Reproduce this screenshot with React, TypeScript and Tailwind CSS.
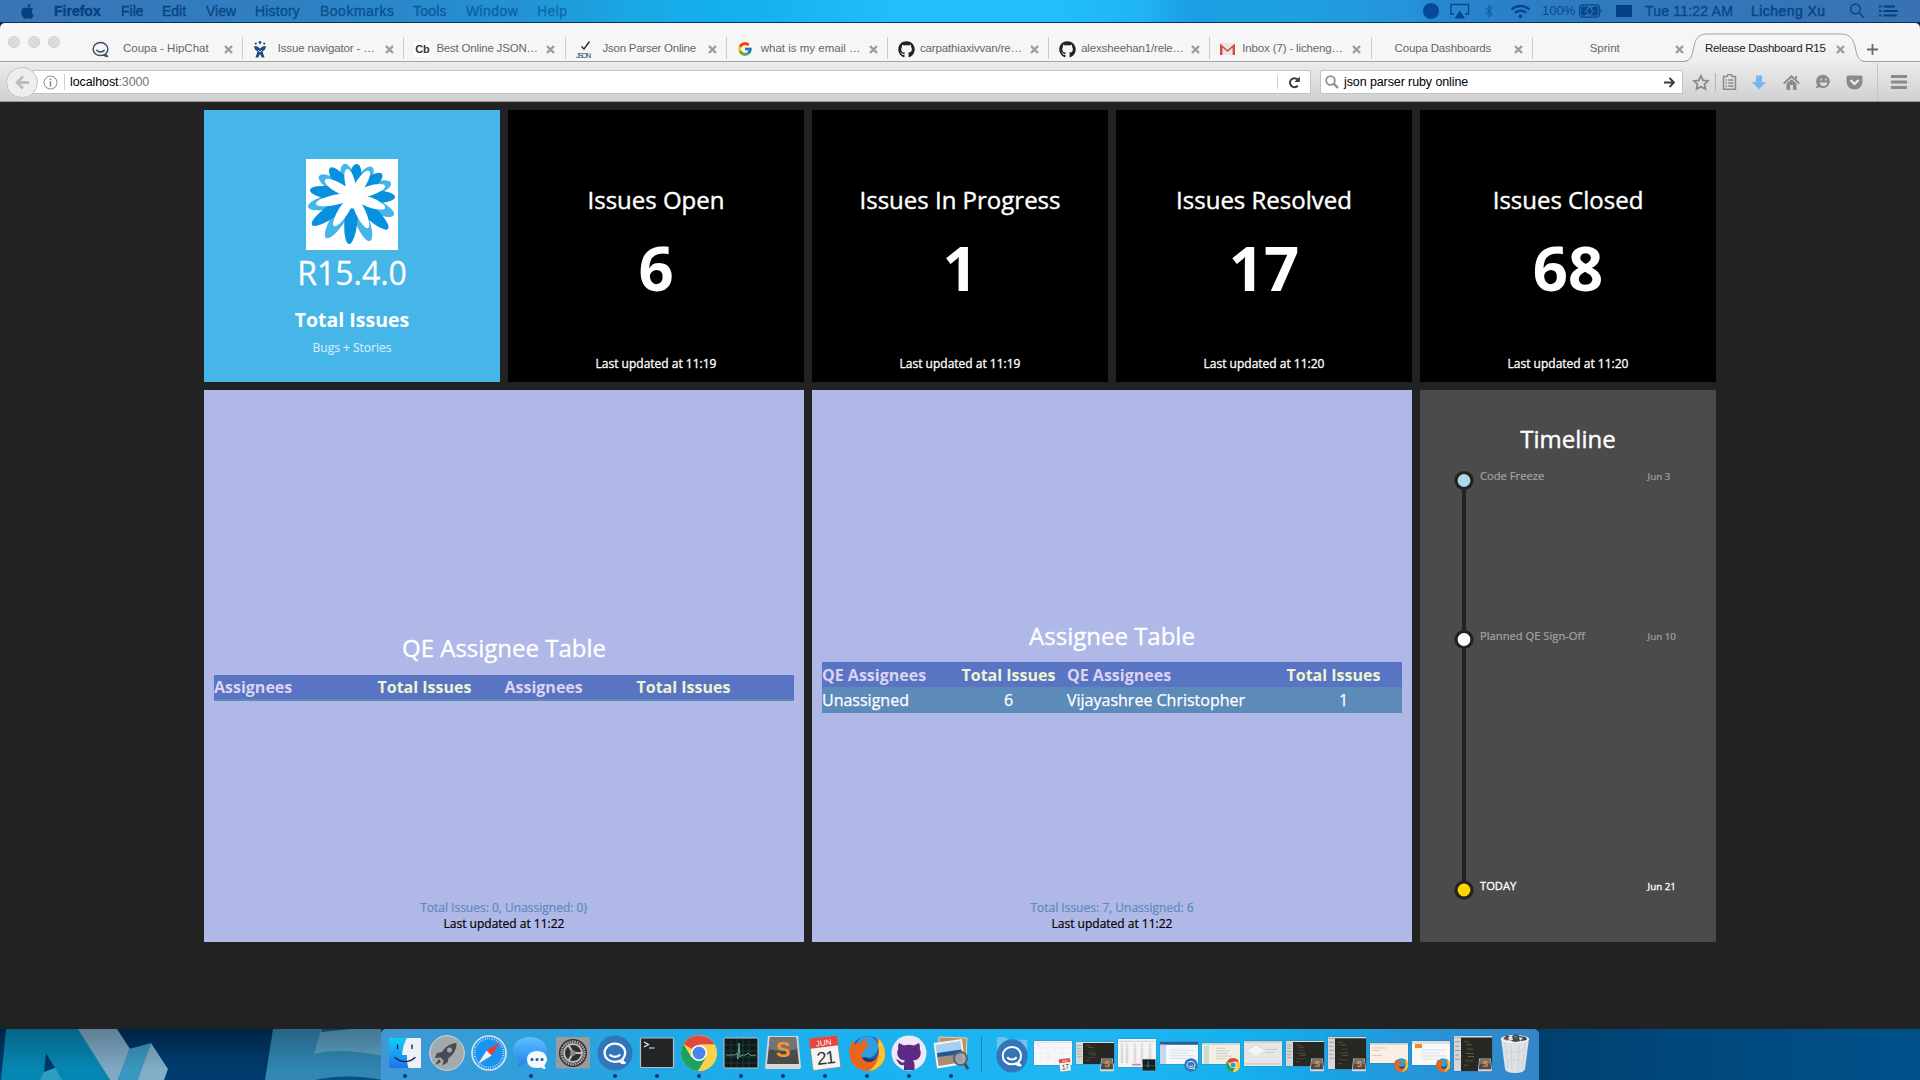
import type { ReactNode } from "react";
import { FaGithub, FaApple, FaWifi, FaBluetoothB } from "react-icons/fa";
import { FcGoogle } from "react-icons/fc";

const helv = "font-['Liberation_Sans',Arial,sans-serif]";

/* ---------- Menu bar ---------- */

const menus = [
  { t: "Firefox", c: "w-[67px] font-bold text-[#04407c]" },
  { t: "File", c: "w-[41px] text-[#04407c]" },
  { t: "Edit", c: "w-[44px] text-[#04437f]" },
  { t: "View", c: "w-[49px] text-[#044783]" },
  { t: "History", c: "w-[65px] tracking-[0.2px] text-[#054a88]" },
  { t: "Bookmarks", c: "w-[93px] tracking-[0.5px] text-[#06508e]" },
  { t: "Tools", c: "w-[53px] tracking-[0.2px] text-[#075a98]" },
  { t: "Window", c: "w-[71px] tracking-[0.4px] text-[#0862a0]" },
  { t: "Help", c: "w-[60px] tracking-[0.4px] text-[#096ca9]" },
];

function MenuBar() {
  return (
    <div
      className={`${helv} flex h-[23px] items-center border-b border-[#04305a] text-[14px] leading-[22px] [-webkit-text-stroke:0.3px] bg-[linear-gradient(90deg,#3a74b5_0px,#2e80c2_300px,#2492d4_520px,#18a9e6_640px,#13b1f0_750px,#23bdfb_900px,#23bdfb_1060px,#1fb5f5_1140px,#1c9ee2_1190px,#1fa0e2_1290px,#2593db_1410px,#2686d0_1440px,#3079bd_1600px,#3872b2_1920px)]`}
    >
      <div className="flex w-[54px] pl-[19px]">
        <FaApple size={17} color="#04407c" />
      </div>
      {menus.map((m) => (
        <span key={m.t} className={`${m.c} whitespace-nowrap`}>{m.t}</span>
      ))}
      <div className="ml-auto flex items-center text-[#07458a]">
        <svg width="16" height="16" viewBox="0 0 16 16" className="mr-[11px]"><circle cx="8" cy="8" r="8" fill="#06499a" /></svg>
        <svg width="20" height="16" viewBox="0 0 20 16" className="mr-[12px]">
          <path d="M4 11H1V1.500H18.500V11H15" fill="none" stroke="#07458a" strokeWidth="1.300" />
          <path d="M9.750 7.500L15 15.500H4.500Z" fill="#07458a" />
        </svg>
        <FaBluetoothB size={14} className="mr-[15px] opacity-60" />
        <FaWifi size={19} className="mr-[12px]" />
        <span className="w-[37px] text-[13px] [-webkit-text-stroke:0px]">100%</span>
        <svg width="24" height="14" viewBox="0 0 24 14" className="mr-[13px]">
          <rect x="0.700" y="0.900" width="19.600" height="12.200" rx="2.500" fill="none" stroke="#07458a" strokeWidth="1.300" />
          <path d="M21.500 4.500Q23.500 7 21.500 9.500Z" fill="#07458a" />
          <path d="M2.300 2.500H10L4.800 8H8.500L6.500 11.500H2.300ZM18.700 2.500H14L12.500 6H16L11 11.500H18.700ZM12.500 2.500L6 7.600H9.500L8.500 11.500L15 6.400H11.500Z" fill="#07458a" />
        </svg>
        <svg width="16" height="12" className="mr-[13px]"><rect width="16" height="12" fill="#053f83" /></svg>
        <span className="w-[106px] whitespace-nowrap text-[14px] tracking-[0.2px]">Tue 11:22 AM</span>
        <span className="w-[98px] whitespace-nowrap text-[14px] tracking-[0.450px] [-webkit-text-stroke:0.5px]">Licheng Xu</span>
        <svg width="16" height="16" viewBox="0 0 16 16" className="mr-[14px]" fill="none" stroke="#07458a" strokeWidth="1.500">
          <circle cx="6.500" cy="6" r="4.800" /><path d="M10 9.500L15 15" />
        </svg>
        <svg width="19" height="12" viewBox="0 0 19 12" className="mr-[22px]" stroke="#053f83" strokeWidth="2">
          <path d="M0 1.500H2.500M0 6H2.500M0 10.500H2.500M4.500 1.500H16M4.500 6H19M4.500 10.500H18" />
        </svg>
      </div>
    </div>
  );
}

/* ---------- Tab strip ---------- */

function HipChatGlyph({ size, color, sw = 1.8 }: { size: number; color: string; sw?: number }) {
  return (
    <svg width={size} height={size} viewBox="0 0 18 18" fill="none" stroke={color} strokeWidth={sw} strokeLinecap="round" strokeLinejoin="round">
      <path d="M13.800 14.200C12.500 15 11 15.400 9 15.400C4.500 15.400 1.200 12.500 1.200 8.600C1.200 4.700 4.500 1.600 9 1.600C13.500 1.600 16.800 4.700 16.800 8.600C16.800 10.500 16 12.300 14.600 13.500C14.800 14.800 15.500 15.700 16.500 16.300C15.200 16.500 13.800 16 12.600 15" />
      <path d="M5 9.800C7 12.200 11 12.200 13 9.800" />
    </svg>
  );
}

const jira = (
  <svg width="14" height="17" viewBox="0 0 14 17">
    <g fill="#1d4a80">
      <circle cx="2.800" cy="2.600" r="1.100" /><circle cx="7" cy="1.500" r="1.400" /><circle cx="11.200" cy="2.600" r="1.100" />
    </g>
    <path d="M1 5L4.500 5.500L7 7.500L9.500 5.500L13 5L12 8.500L9.500 10.500L11.500 16.500H8.800L7 13L5.200 16.500H2.500L4.500 10.500L2 8.500Z" fill="#1d4a80" />
    <path d="M5 9.200L7 11L9 9.200" fill="none" stroke="#f6f6f6" strokeWidth="0.900" />
  </svg>
);
const cb = <span className="flex h-4 w-4 items-center justify-center bg-white text-[11px] font-bold tracking-tight text-[#333]">Cb</span>;
const json = (
  <svg width="16" height="17" viewBox="0 0 16 17">
    <path d="M5.500 5.500L8 8L13.500 0.500" fill="none" stroke="#222" strokeWidth="1.300" />
    <text x="0" y="16.500" fontSize="7" textLength="15" fontFamily="Liberation Sans" fill="#15406a">JSON</text>
  </svg>
);
const gmail = (
  <svg width="15" height="12" viewBox="0 0 15 12">
    <rect width="15" height="12" rx="1" fill="#e8e6e6" />
    <path d="M0 12V0.500L7.500 7L15 0.500V12H12.600V4.500L7.500 9L2.400 4.500V12Z" fill="#d2493e" />
  </svg>
);

const tabs: { t: string; icon?: ReactNode; lead: string; w: string }[] = [
  { t: "Coupa - HipChat", icon: <HipChatGlyph size={17} color="#3a4a6b" sw={1.5} />, lead: "w-[31px]", w: "w-[101px]" },
  { t: "Issue navigator - …", icon: jira, lead: "w-[24.500px]", w: "w-[107.500px] tracking-[-0.15px]" },
  { t: "Best Online JSON…", icon: cb, lead: "w-[22px]", w: "w-[110px] tracking-[-0.2px]" },
  { t: "Json Parser Online", icon: json, lead: "w-[27px]", w: "w-[105px] tracking-[-0.25px]" },
  { t: "what is my email …", icon: <FcGoogle size={16} />, lead: "w-[24px]", w: "w-[108px]" },
  { t: "carpathiaxivvan/re…", icon: <FaGithub size={17} color="#222" />, lead: "w-[22px]", w: "w-[110px] tracking-[-0.15px]" },
  { t: "alexsheehan1/rele…", icon: <FaGithub size={17} color="#222" />, lead: "w-[22px]", w: "w-[110px] tracking-[-0.15px]" },
  { t: "Inbox (7) - licheng…", icon: gmail, lead: "w-[22px]", w: "w-[110px] tracking-[-0.15px]" },
  { t: "Coupa Dashboards", lead: "w-[13px]", w: "w-[119px] tracking-[-0.15px]" },
  { t: "Sprint", lead: "w-[47px]", w: "w-[85px]" },
];

function Close() {
  return (
    <svg width="9" height="9" viewBox="0 0 9 9" stroke="#9c9c9c" strokeWidth="2.400">
      <path d="M1 1L8 8M8 1L1 8" />
    </svg>
  );
}

function TabStrip() {
  return (
    <div className={`${helv} relative flex h-[39px] rounded-t-[5px] border-b border-[#a3a3a3] bg-[#f6f6f6] text-[11.5px] text-[#666]`}>
      <div className="flex w-[82px] gap-2 pt-[13px] pl-2">
        {[0, 1, 2].map((i) => <div key={i} className="h-3 w-3 rounded-full border border-[#cfcfcf] bg-[#dcdcdc]" />)}
      </div>
      {tabs.map((t, i) => (
        <div key={t.t} className={`mt-[14px] flex h-[22px] w-[161.200px] shrink-0 items-center border-r pt-[2px] pl-[10px] ${i === 9 ? "border-transparent" : "border-[#cbcbcb]"}`}>
          <span className={`${t.lead} shrink-0`}>{t.icon}</span>
          <span className={`${t.w} shrink-0 whitespace-nowrap`}>{t.t}</span>
          <Close />
        </div>
      ))}
      <svg width="190" height="31" viewBox="0 0 190 31" className="absolute top-[9.500px] left-[1680px]">
        <defs><linearGradient id="tabfill" x1="0" y1="0" x2="0" y2="1"><stop offset="0" stopColor="#f8f8f8" /><stop offset="1" stopColor="#ececec" /></linearGradient></defs>
        <path d="M0 29H2C9 29 11 26 13 18C15 7 17 1 27 1H161C171 1 174 7 176 18C178 26 180 29 187 29H190V31H0Z" fill="url(#tabfill)" />
        <path d="M0 28.500H2C9 28.500 11 26 13 18C15 7 17 1 27 1H161C171 1 174 7 176 18C178 26 180 28.500 187 28.500H190" fill="none" stroke="#a0a0a0" />
      </svg>
      <div className="relative mt-[14px] flex h-[22px] items-center pt-[2px] pl-[11px] text-[#222]">
        <span className="w-[131px] tracking-[-0.25px] whitespace-nowrap">Release Dashboard R15</span>
        <Close />
        <svg width="11" height="11" viewBox="0 0 11 11" stroke="#6b6b6b" strokeWidth="1.800" className="ml-[22px]"><path d="M5.500 0V11M0 5.500H11" /></svg>
      </div>
    </div>
  );
}

/* ---------- Navigation bar ---------- */

function NavBar() {
  return (
    <div className={`${helv} flex h-[40px] items-center border-b border-[#9b9b9b] bg-[linear-gradient(180deg,#ececec,#d0d0d0)] pt-px text-[12.500px] text-black`}>
      <div className="z-10 ml-[6px] flex h-[31px] w-[32px] items-center justify-center rounded-full border border-[#c4c4c4] bg-[#eeeeee]">
        <svg width="15" height="15" viewBox="0 0 15 15" stroke="#bdbdbd" strokeWidth="2.800" fill="none"><path d="M8 1.500L2 7.500L8 13.500M2.500 7.500H14" /></svg>
      </div>
      <div className="-ml-[6px] flex h-[24px] w-[1279px] items-center rounded-r-[2px] border border-[#c3c3c3] bg-white pl-[10px]">
        <svg width="15" height="15" viewBox="0 0 15 15" fill="none" stroke="#8a8a8a"><circle cx="7.500" cy="7.500" r="6.500" /><path d="M7.500 6.300V11.500M7.500 3.500V5" strokeWidth="1.600" /></svg>
        <div className="mr-[5px] ml-[6px] h-4 w-px bg-[#cfcfcf]" />
        <span className="pt-px tracking-[-0.1px] whitespace-nowrap">localhost<span className="text-[#777]">:3000</span></span>
        <div className="mr-[10px] ml-auto h-[14px] w-px bg-[#d0d0d0]" />
        <svg width="13" height="13" viewBox="0 0 13 13" fill="none" stroke="#3c3c3c" strokeWidth="2" className="mr-[9px]">
          <path d="M9.800 9.700A4.500 4.500 0 1 1 9.600 3.400" /><path d="M11.800 0.500V6H6.500Z" fill="#3c3c3c" stroke="none" />
        </svg>
      </div>
      <div className="ml-[9px] flex h-[24px] w-[363px] items-center rounded-[2px] border border-[#c3c3c3] bg-white pl-[4px]">
        <svg width="14" height="14" viewBox="0 0 14 14" fill="none" stroke="#8f8f8f" strokeWidth="1.800" className="mr-[5px]"><circle cx="5.500" cy="5.500" r="4.300" /><path d="M8.700 8.700L13 13" strokeWidth="2.400" /></svg>
        <span className="pt-px tracking-[-0.1px] whitespace-nowrap">json parser ruby online</span>
        <svg width="11" height="11" viewBox="0 0 11 11" fill="none" stroke="#3c3c3c" strokeWidth="1.900" className="mr-[7px] ml-auto"><path d="M0 5.500H9.500M5.500 1L10 5.500L5.500 10" /></svg>
      </div>
      <svg width="18" height="17" viewBox="0 0 18 17" className="ml-[9px]" fill="none" stroke="#8a8a8a" strokeWidth="1.800"><path d="M9 1.800L11.200 6.300L16 6.900L12.500 10.200L13.400 15L9 12.700L4.600 15L5.500 10.200L2 6.900L6.800 6.300Z" /></svg>
      <div className="ml-[5px] h-[18px] w-px bg-[#b5b5b5]" />
      <svg width="15" height="16" viewBox="0 0 15 16" className="ml-[6px]"><path d="M1.500 2.500H5L6 0.500H9L10 2.500H13.500V15.200H1.500Z" fill="none" stroke="#8a8a8a" strokeWidth="1.500" /><path d="M3.500 6H5M6.200 6H11.500M3.500 9H5M6.200 9H11.500M3.500 12H5M6.200 12H11.500" stroke="#8a8a8a" strokeWidth="1.500" /></svg>
      <svg width="16" height="15" viewBox="0 0 16 15" className="ml-[14px]"><path d="M5 0.500H11V7H15L8 14.500L1 7H5Z" fill="#76b6f2" /></svg>
      <svg width="17" height="15" viewBox="0 0 17 15" className="ml-[16px]" fill="#8a8a8a"><path d="M8.500 0L17 8L15.700 9.300L8.500 2.800L1.300 9.300L0 8ZM12 1H14V4.500L12 2.800Z" /><path d="M3.500 8.500L8.500 4.300L13.500 8.500V15H10V10H7V15H3.500Z" /></svg>
      <svg width="16" height="16" viewBox="0 0 16 16" className="ml-[15px]"><path d="M8.500 0.800A7 6.600 0 1 1 4.500 13.200L0.500 14.500L2.300 11A7 6.600 0 0 1 8.500 0.800Z" fill="#8a8a8a" /><path d="M4.500 8.500H12.500Q11.500 12 8.500 12Q5.500 12 4.500 8.500ZM5.500 4.500H7V6.500H5.500ZM10 4.500H11.500V6.500H10Z" fill="#e0e0e0" /></svg>
      <svg width="17" height="15" viewBox="0 0 17 15" className="ml-[15px]"><path d="M0.500 2Q0.500 0.500 2 0.500H15Q16.500 0.500 16.500 2V6.500A8 8 0 0 1 0.500 6.500Z" fill="#8a8a8a" /><path d="M4.500 5L8.500 9L12.500 5" fill="none" stroke="#eee" strokeWidth="2.200" /></svg>
      <div className="ml-[14px] h-full w-px bg-[#c4c4c4]" />
      <svg width="16" height="14" viewBox="0 0 16 14" className="ml-[13px]" stroke="#8a8a8a" strokeWidth="2.800"><path d="M0 1.500H16M0 7H16M0 12.500H16" /></svg>
    </div>
  );
}

/* ---------- Dashboard ---------- */

function Petals({ tips, w, fill }: { tips: number[][]; w: number; fill: string }) {
  return (
    <g fill={fill}>
      {tips.map(([x, y]) => {
        const dx = x - 47, dy = y - 37;
        const len = Math.hypot(dx, dy);
        const ang = (Math.atan2(dy, dx) * 180) / Math.PI;
        return <ellipse key={`${x}-${y}`} cx={len / 2} cy={0} rx={len / 2} ry={w} transform={`translate(47 37) rotate(${ang})`} />;
      })}
    </g>
  );
}

function CoupaLogo() {
  return (
    <svg width="92" height="91" viewBox="0 0 92 91" className="bg-white">
      <Petals w={7} fill="#45b5ea" tips={[[38, 5], [66, 8], [85, 24], [88, 56], [64, 82], [20, 79], [2, 48], [13, 17]]} />
      <Petals w={6.5} fill="#0690dd" tips={[[51, 5], [76, 15], [89, 38], [82, 70], [43, 85], [6, 66], [4, 31], [24, 9]]} />
      <Petals w={5} fill="#ffffff" tips={[[41, 10], [63, 12], [79, 27], [79, 49], [62, 69], [28, 67], [10, 45], [19, 21]]} />
      <circle cx="47" cy="37" r="12.500" fill="#fff" />
    </svg>
  );
}

function NumberTile({ title, value, time }: { title: string; value: string; time: string }) {
  return (
    <div className="flex w-[296px] flex-col items-center bg-black text-white">
      <h1 className="mt-[73px] h-[34px] text-[24px] leading-[34px] [-webkit-text-stroke:0.4px]">{title}</h1>
      <div className="mt-[8px] h-[84px] text-[61.500px] leading-[84px] font-bold">{value}</div>
      <div className="mt-[47px] h-4 text-[12px] leading-4 [-webkit-text-stroke:0.3px]">Last updated at {time}</div>
    </div>
  );
}

const HeadCell = ({ c, k, children }: { c: string; k: "n" | "t"; children: ReactNode }) => (
  <span className={`${c} ${k === "n" ? "text-[#dcd3f3]" : "text-[#ecf5d4]"} shrink-0 whitespace-nowrap font-bold`}>{children}</span>
);

function Dashboard() {
  return (
    <div className="flex h-[927px] flex-col gap-2 overflow-hidden rounded-b-[5px] bg-[#222222] pt-2 pl-[204px] font-['Open_Sans',sans-serif]">
      <div className="flex h-[272px] gap-2">
        <div className="flex w-[296px] flex-col items-center bg-[#46b6e9] pt-[49px] text-white">
          <CoupaLogo />
          <div className="h-[46px] text-[32px] leading-[46px] [-webkit-text-stroke:0.3px]">R15.4.0</div>
          <div className="mt-[10px] h-[28px] text-[19.500px] leading-[28px] font-bold">Total Issues</div>
          <div className="mt-[6px] text-[12px] leading-[16px] text-white/70 [-webkit-text-stroke:0.2px]">Bugs + Stories</div>
        </div>
        <NumberTile title="Issues Open" value="6" time="11:19" />
        <NumberTile title="Issues In Progress" value="1" time="11:19" />
        <NumberTile title="Issues Resolved" value="17" time="11:20" />
        <NumberTile title="Issues Closed" value="68" time="11:20" />
      </div>
      <div className="flex h-[552px] gap-2">
        <div className="flex w-[600px] flex-col items-center bg-[#b0b8e8]">
          <h1 className="mt-[241px] h-[34px] text-[24px] leading-[34px] text-white [-webkit-text-stroke:0.3px]">QE Assignee Table</h1>
          <div className="mt-[10px] flex h-[26px] w-[580px] border-b-2 border-[#5c8bba] bg-[#5974c3] text-[16px] leading-[25px]">
            <HeadCell c="w-[163.500px]" k="n">Assignees</HeadCell>
            <HeadCell c="w-[127px]" k="t">Total Issues</HeadCell>
            <HeadCell c="w-[132px]" k="n">Assignees</HeadCell>
            <HeadCell c="w-[120px]" k="t">Total Issues</HeadCell>
          </div>
          <div className="mt-[199px] text-[12px] leading-4 text-[#5c8bba] [-webkit-text-stroke:0.2px]">Total Issues: 0, Unassigned: 0&#125;</div>
          <div className="text-[12px] leading-4 text-black [-webkit-text-stroke:0.2px]">Last updated at 11:22</div>
        </div>
        <div className="flex w-[600px] flex-col items-center bg-[#b0b8e8]">
          <h1 className="mt-[229px] h-[34px] text-[24px] leading-[34px] text-white [-webkit-text-stroke:0.3px]">Assignee Table</h1>
          <div className="mt-[9px] flex h-[25px] w-[580px] bg-[#5974c3] text-[16px] leading-[26px]">
            <HeadCell c="w-[139.500px]" k="n">QE Assignees</HeadCell>
            <HeadCell c="w-[105.500px]" k="t">Total Issues</HeadCell>
            <HeadCell c="w-[219.500px]" k="n">QE Assignees</HeadCell>
            <HeadCell c="w-[110px]" k="t">Total Issues</HeadCell>
          </div>
          <div className="flex h-[26px] w-[580px] bg-[#5c8bba] text-[16px] leading-[26px] text-white [-webkit-text-stroke:0.25px]">
            <span className="w-[140px]">Unassigned</span>
            <span className="w-[93px] text-center">6</span>
            <span className="w-[232px] pl-3">Vijayashree Christopher</span>
            <span className="w-[93px] pl-[20px] text-center">1</span>
          </div>
          <div className="mt-[187px] text-[12px] leading-4 text-[#5c8bba] [-webkit-text-stroke:0.2px]">Total Issues: 7, Unassigned: 6</div>
          <div className="text-[12px] leading-4 text-black [-webkit-text-stroke:0.2px]">Last updated at 11:22</div>
        </div>
        <div className="flex w-[296px] flex-col bg-[#4b4b4b]">
          <h1 className="mt-[32px] h-[34px] text-center text-[24px] leading-[34px] text-white [-webkit-text-stroke:0.4px]">Timeline</h1>
          <div className="mt-[14px] flex pl-[34px]">
            <svg width="20" height="431" viewBox="0 0 20 431" stroke="#222" strokeWidth="3.200">
              <path d="M10 10V420" strokeWidth="4" />
              <circle cx="10" cy="10.500" r="8" fill="#add8e6" />
              <circle cx="10" cy="169.500" r="8" fill="#ffffff" />
              <circle cx="10" cy="420" r="8" fill="#ffd700" />
            </svg>
            <div className="flex flex-col pl-[6px] text-[11.200px] leading-4 text-[#a3a3a3] [-webkit-text-stroke:0.2px]">
              <div className="mt-[-2px] flex h-[160px]"><span className="w-[167.500px]">Code Freeze</span><span className="pt-px text-[9.800px]">Jun 3</span></div>
              <div className="flex h-[250px]"><span className="w-[167.500px]">Planned QE Sign-Off</span><span className="pt-px text-[9.800px]">Jun 10</span></div>
              <div className="flex text-white [-webkit-text-stroke:0.3px]"><span className="w-[167.500px]">TODAY</span><span className="pt-px text-[9.800px]">Jun 21</span></div>
            </div>
          </div>
        </div>
      </div>
    </div>
  );
}

/* ---------- Dock ---------- */

function Chrome() {
  return (
    <g>
      <circle cx="18" cy="18" r="18" fill="#f9d04f" />
      <path d="M18 18L2.400 9A18 18 0 0 1 33.600 9.500H18Z" fill="#dd4b3e" />
      <path d="M2.400 9A18 18 0 0 0 17 36L25.500 22L18 18L10.500 22.500Z" fill="#1aa260" />
      <path d="M18 9.500H33.600A18 18 0 0 1 17 36L25.500 22A8.500 8.500 0 0 0 18 9.500Z" fill="#fbd14b" />
      <circle cx="18" cy="18" r="8" fill="#fff" /><circle cx="18" cy="18" r="6.500" fill="#4a86ec" />
    </g>
  );
}
function Firefox() {
  return (
    <g>
      <circle cx="18.500" cy="17.500" r="16.500" fill="#1d5fae" />
      <circle cx="18" cy="12" r="11" fill="#2f9ede" />
      <path d="M30 4C36 10 38 20 34 27C29 36 18 38 10 34C1 29 -1 20 1 12L3 6L6 9C9 7 12 8 13 8C13 5 15 4 16 3C16 7 18 9 20 10C19 12 16 13 15 14L16 17C13 17 11 19 13 22C16 27 24 28 28 22C31 17 31 10 27 4Z" fill="#e8651b" />
      <path d="M30 4C36 10 38 20 34 27C31 32 25 36 19 36C27 32 32 22 29 10Z" fill="#fbc62c" />
      <path d="M13 23C16 28 24 29 28 22C27 24 20 25 17 22Z" fill="#163a78" />
    </g>
  );
}
function Sublime() {
  return (
    <g>
      <path d="M3 1H33L36 32Q36 34 34 34H2Q0 34 0 32Z" fill="#d8d8d8" />
      <path d="M5 2H31L34 29H2Z" fill="#4a4a4a" /><path d="M5 2H31L32.500 14Q18 18 3.500 14Z" fill="#747474" />
      <text x="18" y="22" textAnchor="middle" fontSize="22" fontWeight="bold" fontFamily="Liberation Sans" fill="#f79330">S</text>
    </g>
  );
}
function HipChat() {
  return (
    <g>
      <circle cx="18" cy="18" r="17.500" fill="#3375bb" />
      <g transform="translate(6 6.500) scale(1.320)" fill="none" stroke="#fff" strokeWidth="1.700" strokeLinejoin="round">
        <path d="M13.800 14.200C12.500 15 11 15.400 9 15.400C4.500 15.400 1.200 12.500 1.200 8.600C1.200 4.700 4.500 1.600 9 1.600C13.500 1.600 16.800 4.700 16.800 8.600C16.800 10.500 16 12.300 14.600 13.500C14.800 14.800 15.500 15.700 16.500 16.300C15.200 16.500 13.800 16 12.600 15" />
        <path d="M5 9.800C7 12.200 11 12.200 13 9.800" />
      </g>
    </g>
  );
}
function Calendar({ day }: { day: string }) {
  return (
    <g transform="rotate(-7 18 18)">
      <rect x="4" y="2" width="28" height="32" rx="1.500" fill="#f4f4f4" stroke="#777" strokeWidth="0.600" />
      <path d="M4 2H32V12H4Z" fill="#e4453c" />
      <text x="18" y="10.500" textAnchor="middle" fontSize="8" fontFamily="Liberation Sans" fill="#fff">JUN</text>
      <text x="18" y="29" textAnchor="middle" fontSize="18" letterSpacing="-1" fontFamily="Liberation Sans" fill="#333">{day}</text>
    </g>
  );
}
function Monitor() {
  return (
    <g>
      <rect x="1" y="3" width="34" height="30" rx="1" fill="#10191a" stroke="#b9c4c8" />
      <path d="M2 10H34M2 16H34M2 22H34M2 28H34M8 4V32M14 4V32M20 4V32M26 4V32" stroke="#27443f" strokeWidth="0.700" />
      <path d="M3 20H12L14 18L15 24L16 8L17 22L19 20H23L25 18L28 20.500L33 20" fill="none" stroke="#63b79d" strokeWidth="0.900" />
    </g>
  );
}

const apps: { id: string; dot: boolean; art: ReactNode }[] = [
  { id: "finder", dot: true, art: (
    <g>
      <defs><linearGradient id="fnd" x1="0" y1="0" x2="0" y2="1"><stop offset="0" stopColor="#0ed0fb" /><stop offset="1" stopColor="#2072ee" /></linearGradient></defs>
      <rect x="2" y="3" width="32" height="30" rx="1" fill="#eef2f8" />
      <path d="M2 3H20C17 8 15.500 14 15 20H20C20 25 20 29 21.500 33H2Z" fill="url(#fnd)" />
      <path d="M10.500 10V13.500M25 10V13.500M8 22.500C14 28 22 28 28 22.500" fill="none" stroke="#16263f" strokeWidth="1.400" strokeLinecap="round" />
    </g>) },
  { id: "launchpad", dot: false, art: (
    <g>
      <circle cx="18" cy="18" r="17.300" fill="#a4a9ad" stroke="#d6dadc" />
      <path d="M27.500 8C21 8.500 16 12 13 17L8 18L5.800 23L11.500 22.500L14.500 25.500L13.500 30.500L18.500 27.500L19.500 23C24.500 20 27.500 14.500 27.500 8ZM10 24L6 30L12 27Z" fill="#484c51" />
      <circle cx="20.500" cy="15" r="2.500" fill="#a4a9ad" />
    </g>) },
  { id: "safari", dot: false, art: (
    <g>
      <circle cx="18" cy="18" r="17" fill="#1b94f0" stroke="#dfe5ea" strokeWidth="1.600" />
      <circle cx="18" cy="18" r="14.500" fill="none" stroke="#c8e6fb" strokeWidth="2" strokeDasharray="0.800 1.480" />
      <path d="M29 7L20.500 20.500L15.500 15.500Z" fill="#f03a36" /><path d="M7 29L15.500 15.500L20.500 20.500Z" fill="#f2f2f2" />
    </g>) },
  { id: "messages", dot: true, art: (
    <g>
      <defs><linearGradient id="msg" x1="0" y1="0" x2="0" y2="1"><stop offset="0" stopColor="#5ec0fb" /><stop offset="1" stopColor="#1f83f2" /></linearGradient></defs>
      <path d="M17 2C26.500 2 34 7.500 34 15C34 22.500 27 27.500 17 27.500Q14.500 27.500 12 27Q9 31 4.500 31Q7 28 6.500 24.500Q0 21 0 15C0 7.500 7.500 2 17 2Z" fill="url(#msg)" />
      <path d="M24 16C30 16 34 19.500 34 24.500Q34 27.500 31.500 30Q31.500 32.500 33 34Q30 34 28 32.500Q26 33 24 33C17.500 33 14 29.500 14 24.500C14 19.500 18 16 24 16Z" fill="#f4f8fd" />
      <g fill="#29598f"><circle cx="19" cy="24.500" r="1.500" /><circle cx="24" cy="24.500" r="1.500" /><circle cx="29" cy="24.500" r="1.500" /></g>
    </g>) },
  { id: "prefs", dot: false, art: (
    <g>
      <rect x="1" y="2" width="34" height="31.500" rx="1.500" fill="#9b9b9b" />
      <circle cx="18" cy="18" r="14" fill="#303030" /><circle cx="18" cy="18" r="11.500" fill="none" stroke="#aaa" strokeWidth="2.400" strokeDasharray="1.600 0.800" />
      <circle cx="18" cy="18" r="9" fill="none" stroke="#bcbcbc" strokeWidth="2" />
      <path d="M18 18H27M18 18L13.500 10.200M18 18L13.500 25.800" stroke="#bcbcbc" strokeWidth="2.200" /><circle cx="18" cy="18" r="2.800" fill="#888" />
    </g>) },
  { id: "hipchat", dot: true, art: <HipChat /> },
  { id: "terminal", dot: true, art: (
    <g>
      <rect x="1.500" y="3" width="33" height="29.500" rx="1" fill="#222426" stroke="#b5bcc2" strokeWidth="1.200" />
      <path d="M5 7L9.500 9.500L5 12M10 13H15.500" fill="none" stroke="#eee" strokeWidth="1.200" />
    </g>) },
  { id: "chrome", dot: true, art: <Chrome /> },
  { id: "monitor", dot: true, art: <Monitor /> },
  { id: "sublime", dot: true, art: <Sublime /> },
  { id: "calendar", dot: true, art: <Calendar day="21" /> },
  { id: "firefox", dot: true, art: <Firefox /> },
  { id: "github", dot: true, art: (
    <g>
      <circle cx="18" cy="18" r="17.500" fill="#ece8f5" />
      <path d="M8 8L13 10.500Q18 9 23 10.500L28 8Q29.500 11 28.800 14Q30.500 17 29.500 20Q28 25 22 25.500Q23.500 27 23.500 30V35H13V30Q9 31 7 27L5 24.500Q8 24 10 27Q12 28 13 27Q13.300 26 14 25.500Q8 25 6.500 20Q5.500 17 7.200 14Q6.500 11 8 8Z" fill="#5c2a85" />
    </g>) },
  { id: "preview", dot: true, art: (
    <g>
      <path d="M6 2L34 3L33 26L6 24Z" fill="#b99461" stroke="#e2d3b5" />
      <path d="M0.500 8L29 4L32 29L4 33.500Z" fill="#f3f3f1" />
      <path d="M2.500 10L27.500 6L28.500 16L4 20Z" fill="#a5d0f3" /><path d="M4 18L28.500 14.500L29 20L4.500 23Z" fill="#24579d" />
      <path d="M4.500 22L29 19L30 27L5.500 31Z" fill="#a48e75" />
      <circle cx="27.500" cy="23.500" r="6.500" fill="#9aa3aa" fillOpacity="0.800" stroke="#59616a" strokeWidth="2" /><path d="M32 29L35 34" stroke="#444" strokeWidth="2.500" />
    </g>) },
];

type Thumb = { h: string; bg: string; kind: "code" | "doc" | "cal" | "sheet" | "web"; badge?: ReactNode };
const thumbs: Thumb[] = [
  { h: "h-[24px]", bg: "bg-[#f8f8fa]", kind: "cal", badge: <Calendar day="17" /> },
  { h: "h-[22px]", bg: "bg-[#272822]", kind: "code", badge: <Sublime /> },
  { h: "h-[28px]", bg: "bg-[#f4f4f4]", kind: "sheet", badge: <Monitor /> },
  { h: "h-[22px]", bg: "bg-[#f4f7fb]", kind: "web", badge: <HipChat /> },
  { h: "h-[21px]", bg: "bg-[#efefe6]", kind: "doc", badge: <Chrome /> },
  { h: "h-[25px]", bg: "bg-[#e6e6e6]", kind: "doc" },
  { h: "h-[25px]", bg: "bg-[#272822]", kind: "code", badge: <Sublime /> },
  { h: "h-[32px]", bg: "bg-[#272822]", kind: "code", badge: <Sublime /> },
  { h: "h-[20px]", bg: "bg-[#fbeee2]", kind: "doc", badge: <Firefox /> },
  { h: "h-[24px]", bg: "bg-[#f8f8f8]", kind: "web", badge: <Firefox /> },
  { h: "h-[35px]", bg: "bg-[#272822]", kind: "code", badge: <Sublime /> },
];

function ThumbArt({ kind, i }: { kind: Thumb["kind"]; i: number }) {
  return (
    <svg width="38" height="100%" viewBox="0 0 38 24" preserveAspectRatio="none">
      {kind === "code" && (<g><path d="M0 0H38V1H0Z" fill="#ddd" /><path d="M0 1H7V24H0Z" fill="#d4d6d8" /><path d="M1 4H6M1 7H5M1 10H6M1 13H5M1 16H6" stroke="#999" strokeWidth="0.700" />
        <g opacity="0.550"><path d="M10 4H15M12 12H20M10 20H14" stroke="#a6733d" strokeWidth="0.700" /><path d="M12 6H18M14 14H20" stroke="#8a9c3c" strokeWidth="0.700" /><path d="M13 9H19M11 17H19" stroke="#7d5a87" strokeWidth="0.700" /></g></g>)}
      {kind === "cal" && <g stroke="#e6e6ea" strokeWidth="0.400"><path d="M0 1H38V2H0Z" fill="#e5e5e5" /><path d="M0 7H38M0 12H38M0 17H38M7 5V24M14 5V24M21 5V24M28 5V24" /><path d="M3 4H6M14 15H16" stroke="#f08a8a" /></g>}
      {kind === "sheet" && <g stroke="#c9c9cd" strokeWidth="0.800"><path d="M1 2H37" /><path d="M4 4V21M9 4V21M17 4V21M24 4V21M32 4V21" strokeDasharray="1 0.700" strokeWidth="2.500" /><path d="M14 22H23" stroke="#d77fc0" strokeWidth="1.500" /></g>}
      {kind === "web" && <g><path d="M0 0H38V3H0Z" fill={i === 3 ? "#2c5b96" : "#dedede"} />{i === 3 ? <path d="M0 3H6V24H0Z" fill="#c8d8eb" /> : <path d="M3 3H10V7H3Z" fill="#f08a24" />}<path d="M10 9H34M10 12H28M10 15H34M10 18H26" stroke="#ccd4de" strokeWidth="0.700" /></g>}
      {kind === "doc" && <g><path d="M0 0H38V2H0Z" fill="#d0d0cf" />{i === 4 && <path d="M2 3H7V24H2Z" fill="#c9dccb" />}{i === 5 && <path d="M2 9L12 4L22 9L12 15Z" fill="#f6f6f6" stroke="#c9c9c9" strokeWidth="0.500" />}<path d={i === 5 ? "M22 8H34M22 11H30M1 22H37" : i === 8 ? "M2 6H16M2 9H10M2 15H12" : "M14 6H24M14 9H28M14 12H26M14 15H30M14 18H24"} stroke="#bfae9f" strokeWidth="0.600" /></g>}
    </svg>
  );
}

function Dock() {
  return (
    <div className="flex h-[51px] w-[1158px] shrink-0 rounded-t-[5px] bg-[linear-gradient(90deg,#4197d3_0px,#2f9fdb_150px,#1fa9e5_300px,#1bb1ef_450px,#20b6f2_700px,#16b0ee_860px,#1ba1e2_960px,#2c8fd4_1080px,#3585c8_1156px)] pl-[3px]">
      {apps.map((a) => (
        <div key={a.id} className="flex w-[42px] flex-col items-center pt-[6px]">
          <svg width="36" height="36" viewBox="0 0 36 36">{a.art}</svg>
          {a.dot && <div className="mt-[3px] h-1 w-1 rounded-full bg-[#0b3868]" />}
        </div>
      ))}
      <div className="mt-[7px] mr-[14px] ml-[9px] h-[37px] w-px bg-[#1585bb]" />
      <svg width="32" height="38" viewBox="0 0 36 40" preserveAspectRatio="none" className="mt-[6px] mr-[6px]">
        <path d="M1 2H11L14 5H35V16H1Z" fill="#6cc4ee" /><g transform="translate(0 4)"><HipChat /></g>
      </svg>
      {thumbs.map((t, i) => (
        <div key={i} className="relative mr-1 flex h-[48px] w-[38px] shrink-0 items-center">
          <div className={`${t.h} ${t.bg} w-[38px] overflow-hidden shadow-[0_0_1px_#456]`}><ThumbArt kind={t.kind} i={i} /></div>
          {t.badge && <svg width="14" height="14" viewBox="0 0 36 36" className="absolute right-0 bottom-[5px]">{t.badge}</svg>}
        </div>
      ))}
      <svg width="30" height="41" viewBox="0 0 30 41" className="mt-[4px] ml-[4px]">
        <path d="M1 5L5 36Q6 40 15 40Q24 40 25 36L29 5Z" fill="#dfe2e5" />
        <path d="M5 10L8 36M25 10L22 36M11 12L12 38M19 12L18 38M6 18Q15 22 24 16M7 28Q15 24 23 30" stroke="#cdd1d6" fill="none" />
        <ellipse cx="15" cy="6" rx="14" ry="4" fill="#f3f3f3" />
        <path d="M3 6L7 2L11 4L15 1L20 3L26 4L27 7L15 9Z" fill="#40474e" /><path d="M8 4L12 3L13 7L9 8ZM19 4L23 5L20 8Z" fill="#e6e0d4" /><path d="M14 3L17 3L16 6Z" fill="#35a0a8" /><path d="M5 5L8 6L6 8Z" fill="#c2543b" />
      </svg>
    </div>
  );
}

function WallpaperLeft() {
  return (
    <svg width="381" height="51" viewBox="0 0 381 51">
      <defs>
        <linearGradient id="wbg" x1="0" y1="0" x2="0" y2="1"><stop offset="0" stopColor="#00305a" /><stop offset="0.500" stopColor="#003a6b" /><stop offset="1" stopColor="#003c70" /></linearGradient>
        <linearGradient id="wsh" x1="0" y1="0" x2="0" y2="1"><stop offset="0" stopColor="#000" stopOpacity="0.250" /><stop offset="0.800" stopColor="#000" stopOpacity="0" /></linearGradient>
      </defs>
      <rect width="382" height="51" fill="url(#wbg)" />
      <path d="M6 0H79L110 51H1Z" fill="#0687b3" />
      <path d="M46 24L55 39L44 43Z" fill="#00386a" /><path d="M44 43L55 39L62 51H40Z" fill="#2d9dc2" />
      <path d="M78 0H117L130 20L118 51H110Z" fill="#7fa9c4" />
      <path d="M129 20L151 14L139 51H118Z" fill="#3a97c0" /><path d="M151 14L168 40L164 51H138Z" fill="#82aec8" />
      <path d="M273 0H382V51H265Z" fill="#3186b2" />
      <path d="M321 0H382V27Q340 18 314 25Z" fill="#5a9fc2" /><path d="M322 0H352Q340 1 321 3Z" fill="#155685" />
      <path d="M315 51Q345 44 382 51Z" fill="#065086" />
      <rect width="382" height="51" fill="url(#wsh)" />
    </svg>
  );
}

export default function App() {
  return (
    <div className="flex h-[1080px] w-[1920px] flex-col overflow-hidden bg-[#012a52]">
      <MenuBar />
      <TabStrip />
      <NavBar />
      <Dashboard />
      <div className="flex h-[51px]">
        <WallpaperLeft />
        <Dock />
        <div className="w-[381px] bg-[linear-gradient(90deg,#00406f,#004a7f_50%,#00508a)]" />
      </div>
    </div>
  );
}
